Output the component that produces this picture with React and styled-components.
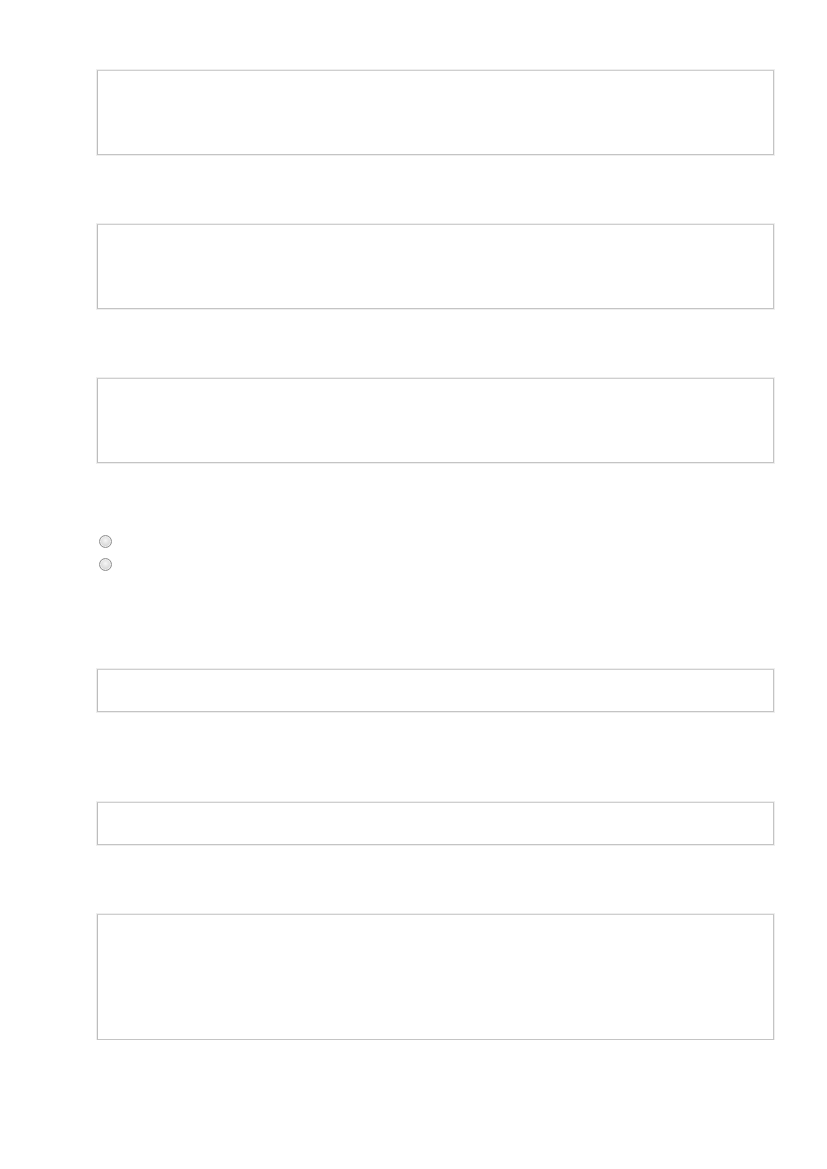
import React from 'react';
import styled, { createGlobalStyle } from 'styled-components';

const GlobalStyle = createGlobalStyle`
  html, body {
    margin: 0;
    padding: 0;
    background: #ffffff;
    font-family: "Liberation Sans", Arial, sans-serif;
  }
`;

const Form = styled.form`
  display: flex;
  flex-direction: column;
  padding: 70px 53px 0 97px;
`;

const Box = styled.div`
  box-sizing: border-box;
  width: 677px;
  height: ${({ $h }) => $h}px;
  margin-bottom: ${({ $mb }) => $mb || 0}px;
  border: 1px solid #c4c4c4;
  border-top-color: #cfcfcf;
  border-left-color: #bdbdbd;
  box-shadow: 0 0 0 1px #eeeeee;
  background: #ffffff;
`;

const RadioGroup = styled.div`
  display: flex;
  flex-direction: column;
  gap: 10px;
  padding-left: 2px;
  margin: 72px 0 98px 0;
`;

const Radio = styled.span`
  display: block;
  box-sizing: border-box;
  width: 13px;
  height: 13px;
  border-radius: 50%;
  border: 1px solid #8f8f8f;
  background: radial-gradient(circle at 50% 40%, #f6f6f6 0%, #dcdcdc 55%, #bdbdbd 100%);
  box-shadow: inset 0 0 0 1px #f0f0f0;
`;

export default function App() {
  return (
    <>
      <GlobalStyle />
      <Form>
        <Box $h={85} $mb={69} />
        <Box $h={85} $mb={69} />
        <Box $h={85} />
        <RadioGroup>
          <Radio />
          <Radio />
        </RadioGroup>
        <Box $h={43} $mb={90} />
        <Box $h={43} $mb={69} />
        <Box $h={126} />
      </Form>
    </>
  );
}
